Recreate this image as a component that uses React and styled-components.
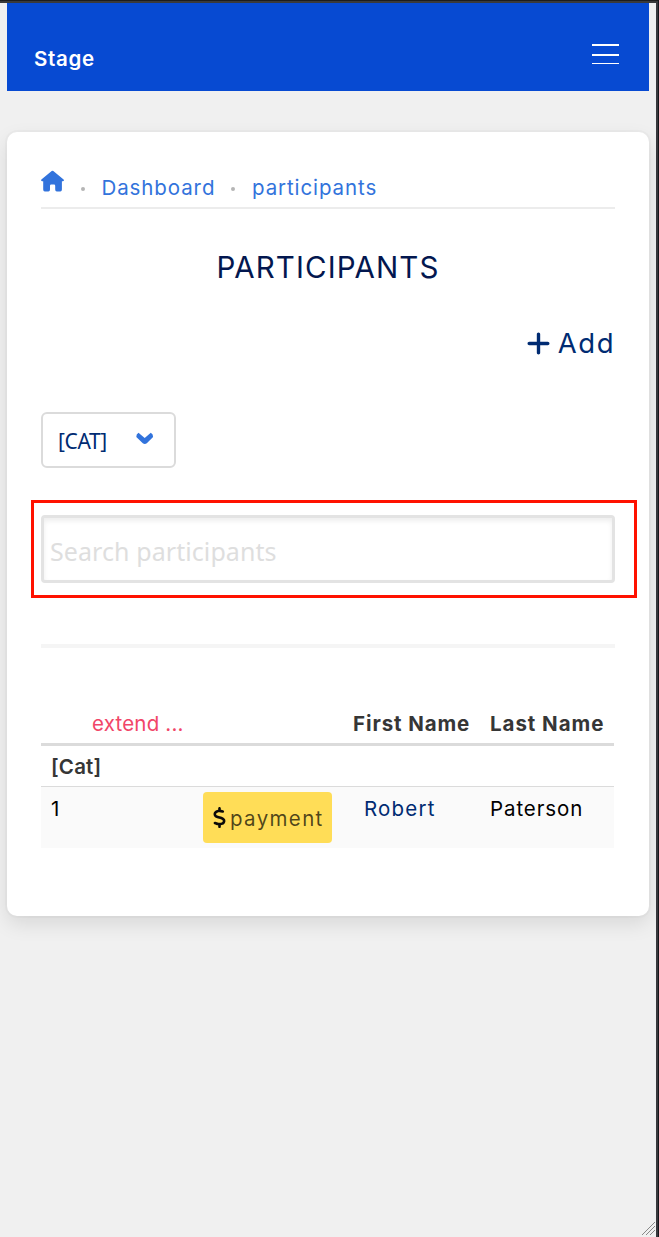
import styled, { createGlobalStyle } from "styled-components"
import { FaPlus, FaDollarSign } from "react-icons/fa6"

const GlobalStyle = createGlobalStyle`
* {
  box-sizing: border-box;
}
body {
  margin: 0;
  font-family: Inter, sans-serif;
  font-size: 20.5px;
  font-weight: 400;
  background-color: #f0f0f0;
}
`
const Frame = styled.div`
position: relative;
height: 1237px;
border-top: 1px solid #1d1d1d;
border-right: 1px solid #16161a;
overflow: hidden;
`
const Page = styled.div`
height: 1236px;
padding: 0 7px;
border-top: 2px solid #3a3a3a;
border-right: 2px solid #38383d;
background-color: #f0f0f0;
`
const Header = styled.header`
height: 88px;
padding: 23px 30px 0 27px;
display: flex;
justify-content: space-between;
background-color: #074ad2;
color: white;
`
const Brand = styled.a`
font-weight: 600;
line-height: 66px;
letter-spacing: 0.7px;
`
const Burger = styled.div`
width: 27px;
padding-top: 18px;
`
const Bar = styled.span`
display: block;
height: ${(props) => props.$thick}px;
margin-bottom: ${(props) => props.$gap}px;
background-color: white;
`
const Card = styled.main`
height: 784px;
margin-top: 41px;
padding: 0 34px;
border-radius: 10px;
background-color: white;
box-shadow: 0 8px 20px rgba(10, 10, 10, 0.1), 0 0 0 2px rgba(10, 10, 10, 0.02);
`
const Breadcrumb = styled.nav`
height: 77px;
padding-top: 38px;
display: flex;
border-bottom: 2px solid #ececec;
color: #3273dc;
line-height: 36px;
svg {
  flex: none;
}
`
const Crumb = styled.a`
width: ${(props) => props.$width}px;
letter-spacing: ${(props) => props.$spacing}px;
white-space: nowrap;
`
const Dot = styled.span`
flex: none;
width: 4px;
height: 4px;
margin: 17px 17px 0 15.5px;
border-radius: 50%;
background-color: #b5b5b5;
`
const Title = styled.h1`
margin: 36px 0 0;
font-size: 29.5px;
font-weight: 400;
line-height: 44px;
letter-spacing: 1.1px;
text-align: center;
color: #03174f;
`
const AddLink = styled.a`
margin-top: 34px;
display: flex;
align-items: center;
justify-content: flex-end;
gap: 6px;
height: 40px;
font-size: 27.5px;
letter-spacing: 1.5px;
color: #002b72;
`
const Select = styled.button`
width: 135px;
height: 56px;
margin: 49px 0 32px;
padding: 0 20px 0 15px;
display: flex;
align-items: center;
justify-content: space-between;
border: 2px solid #dbdbdb;
border-radius: 6px;
background-color: white;
font-family: "Noto Sans", sans-serif;
font-size: 21px;
font-weight: 400;
letter-spacing: -0.4px;
color: #002b72;
span {
  padding-top: 2px;
}
svg {
  margin-bottom: 3px;
}
`
const SearchBox = styled.div`
height: 98px;
margin: 0 -22px 0 -10px;
padding: 12px 19px 12px 7px;
border: 3px solid #ff1100;
`
const SearchInput = styled.input`
display: block;
width: 100%;
height: 68px;
padding: 4px 6px 0;
border: 3px solid #e3e3e3;
border-radius: 4px;
outline: none;
background-color: white;
box-shadow: inset 0 3px 5px rgba(10, 10, 10, 0.07);
font-family: "Noto Sans", sans-serif;
font-size: 25px;
letter-spacing: 0.08px;
&::placeholder {
  color: #dedede;
}
`
const Divider = styled.hr`
height: 4px;
margin: 46px 0 56px;
border: none;
background-color: #f5f5f5;
`
const Table = styled.table`
width: 573px;
table-layout: fixed;
border-collapse: separate;
border-spacing: 0;
`
const Th = styled.th`
height: 42px;
padding: 0 0 0 ${(props) => props.$left || 0}px;
border-bottom: 3px solid #dbdbdb;
font-weight: ${(props) => (props.$link ? 400 : 700)};
letter-spacing: ${(props) => props.$spacing || 0}px;
text-align: left;
white-space: nowrap;
color: ${(props) => (props.$link ? "#f14668" : "#363636")};
`
const GroupCell = styled.td`
height: 41px;
padding: 0 10px;
border-bottom: 1px solid #dbdbdb;
font-weight: 600;
letter-spacing: 0.2px;
color: #363636;
`
const Td = styled.td`
height: 61px;
padding: 5px 0 0 ${(props) => props.$left || 0}px;
background-color: #fafafa;
color: ${(props) => props.$color || "black"};
letter-spacing: ${(props) => props.$spacing || 0}px;
line-height: 34px;
vertical-align: top;
`
const PaymentButton = styled.button`
width: 129px;
height: 51px;
padding: 0 0 0 6px;
display: flex;
align-items: center;
border: none;
border-radius: 4px;
background-color: #ffdd57;
font-family: inherit;
font-size: 20.5px;
font-weight: 400;
letter-spacing: 1.35px;
color: rgba(0, 0, 0, 0.7);
svg {
  flex: none;
  color: #0a0a0a;
}
span {
  padding-top: 2px;
}
`
const Grip = styled.svg`
position: absolute;
right: 3px;
bottom: 2px;
`

const HomeIcon = () => (
    <svg width="24" height="22" viewBox="0 0 24 22" fill="#3273dc">
        <path d="M10.7 1.1 .4 9.5C-.3 10.3.1 11.2 1 11.2H2.2V19.5Q2.2 21.4 3.8 21.4H7.4Q9 21.4 9 19.5V15.8Q9 14.6 10.2 14.6H13Q14.2 14.6 14.2 15.8V19.5Q14.2 21.4 15.8 21.4H19.3Q20.9 21.4 20.9 19.5V11.2H22C23 11.2 23.4 10.3 22.6 9.5L12.3 1.1Q11.5.4 10.7 1.1Z" />
    </svg>
)

const ChevronIcon = () => (
    <svg width="18" height="13" viewBox="0 0 18 13" fill="#3273dc">
        <path d="M2.5.8 8.7 6.1 14.8.8Q17.3 2 17.1 5L10.8 11.2Q8.8 12.8 6.8 11.2L.3 5Q.1 2 2.5.8Z" />
    </svg>
)

const participants = [{ id: 1, first: "Robert", last: "Paterson" }]

const App = () => {
    return (
        <Frame>
            <GlobalStyle />
            <Page>
                <Header>
                    <Brand>Stage</Brand>
                    <Burger>
                        <Bar $thick={2} $gap={8} />
                        <Bar $thick={2} $gap={7} />
                        <Bar $thick={1} $gap={0} />
                    </Burger>
                </Header>
                <Card>
                    <Breadcrumb>
                        <HomeIcon />
                        <Dot />
                        <Crumb $width={114} $spacing={0.9}>Dashboard</Crumb>
                        <Dot />
                        <Crumb $width={125} $spacing={0.9}>participants</Crumb>
                    </Breadcrumb>
                    <Title>PARTICIPANTS</Title>
                    <AddLink>
                        <FaPlus size={27} />
                        Add
                    </AddLink>
                    <Select>
                        <span>[CAT]</span>
                        <ChevronIcon />
                    </Select>
                    <SearchBox>
                        <SearchInput placeholder="Search participants" />
                    </SearchBox>
                    <Divider />
                    <Table>
                        <colgroup>
                            <col width="41" />
                            <col width="121" />
                            <col width="139" />
                            <col width="137" />
                            <col width="135" />
                        </colgroup>
                        <thead>
                            <tr>
                                <Th />
                                <Th $link $left={10} $spacing={0.2}>extend ...</Th>
                                <Th />
                                <Th $left={11} $spacing={0.9}>First Name</Th>
                                <Th $left={11} $spacing={0.95}>Last Name</Th>
                            </tr>
                        </thead>
                        <tbody>
                            <tr>
                                <GroupCell colSpan={5}>[Cat]</GroupCell>
                            </tr>
                            {participants.map((item) => (
                                <tr key={item.id}>
                                    <Td $left={10}>{item.id}</Td>
                                    <Td />
                                    <Td>
                                        <PaymentButton>
                                            <FaDollarSign size={21} />
                                            <span>payment</span>
                                        </PaymentButton>
                                    </Td>
                                    <Td $left={22} $spacing={1.2} $color="#002b72">{item.first}</Td>
                                    <Td $left={11} $spacing={0.9}>{item.last}</Td>
                                </tr>
                            ))}
                        </tbody>
                    </Table>
                </Card>
            </Page>
            <Grip width="13" height="13" viewBox="0 0 13 13" stroke="#888" fill="none">
                <path d="M0 13 13 0M4 13 13 4M8 13 13 8" />
            </Grip>
        </Frame>
    )
}

export default App
